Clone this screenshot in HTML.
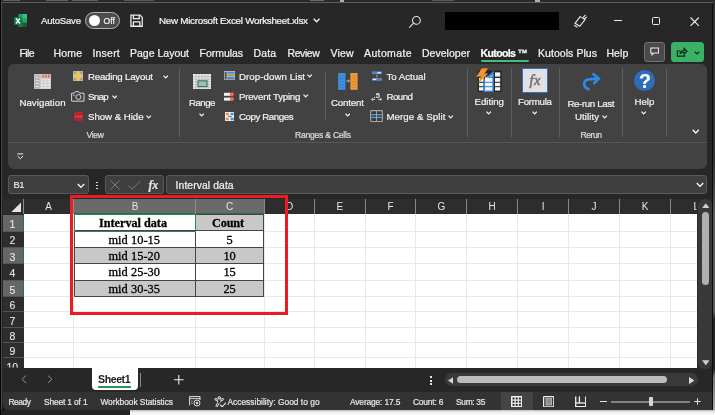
<!DOCTYPE html>
<html><head><meta charset="utf-8"><title>New Microsoft Excel Worksheet.xlsx - Excel</title>
<style>
html,body{margin:0;padding:0}
body{width:715px;height:415px;position:relative;overflow:hidden;background:#0c0c0c;font-family:"Liberation Sans",sans-serif}
div,svg{position:absolute;box-sizing:border-box}
.t{line-height:14px;height:14px;white-space:pre;-webkit-text-stroke:0.22px currentColor}
.win{left:2px;top:2px;width:709.8px;height:407.8px;background:#272727;border-radius:0 0 0 5px}
.ribbon{left:8px;top:64px;width:698.5px;height:105px;background:#424242;border-radius:6px}
.vd{width:1px;background:#5e5e5e}
.box{background:#3f3f3f;border:1px solid #5a5a5a;border-radius:3px;top:175.3px;height:19px}
.hsep{width:1px;top:199.4px;height:14.4px;background:#8a8a8a}
.gl{background:#e8e8e8}
.rh{left:2.5px;width:21.3px;background:#2d2d2d}
.cell{border:1px solid #4a4a4a}
</style></head><body><div id="root" style="left:0;top:0;width:715px;height:415px;overflow:hidden;will-change:transform">
<!-- outer strips -->
<div style="left:0;top:0;width:715px;height:2.4px;background:#2a2a2a"></div>
<div style="left:0;top:409.6px;width:715px;height:5.4px;background:linear-gradient(#bdbdbd,#f2f2f2 45%,#f6f6f6)"></div><div style="left:0;top:409.6px;width:129.8px;height:5.4px;background:#242424"></div>
<div style="left:0;top:0;width:1.3px;height:415px;background:#050505"></div>
<div style="left:711.8px;top:0;width:3.2px;height:410px;background:linear-gradient(#303030,#343434 40%,#585858 52%,#585858 76%,#222 78%,#222 90%,#777 92%,#aaa)"></div><div style="left:711.8px;top:2px;width:1px;height:408px;background:#0c0c0c"></div>
<div class="win"></div>
<div style="left:1.6px;top:1.7px;width:711px;height:0.9px;background:#5c5c5c"></div>
<div style="left:1.2px;top:2px;width:0.8px;height:408px;background:#4a4a4a"></div>
<div style="left:3px;top:0;width:17px;height:1.3px;background:#8a8a8a;opacity:.55"></div>
<div style="left:46px;top:0;width:22px;height:1.3px;background:#8a8a8a;opacity:.6"></div>
<div style="left:72px;top:0;width:26px;height:1.3px;background:#8a8a8a;opacity:.6"></div>
<div style="left:124px;top:0;width:30px;height:1.3px;background:#8a8a8a;opacity:.5"></div>
<div style="left:310px;top:0;width:14px;height:1.3px;background:#9a9a9a;opacity:.6"></div>
<div style="left:340px;top:0;width:4px;height:1.6px;background:#cfcfcf;opacity:.8"></div>
<div style="left:432px;top:0;width:22px;height:1.3px;background:#8a8a8a;opacity:.5"></div>
<div style="left:535px;top:0;width:5px;height:1.6px;background:#cfcfcf;opacity:.8"></div>

<!-- TITLE BAR -->
<svg style="left:14.2px;top:14.2px" width="13.2" height="13.2" viewBox="0 0 27 27">
 <rect x="9" y="0" width="18" height="27" rx="2" fill="#21a366"/>
 <rect x="18" y="0" width="9" height="9" fill="#33c481"/><rect x="18" y="9" width="9" height="9" fill="#21a366"/>
 <rect x="9" y="13.5" width="9" height="13.5" fill="#107c41"/><rect x="18" y="18" width="9" height="9" fill="#185c37"/>
 <rect x="0" y="6" width="16.5" height="16.5" rx="1.8" fill="#107c41"/>
 <path d="M4.2 9 L12.2 19.5 M12.2 9 L4.2 19.5" stroke="#fff" stroke-width="2.9" fill="none"/>
</svg>
<div style="left:85.3px;top:12px;width:35px;height:17.2px;border:1.2px solid #b4b4b4;border-radius:9px;background:#4c4c4c"></div>
<div style="left:88.6px;top:15.1px;width:11.2px;height:11.2px;border-radius:6px;background:#fff"></div>
<svg style="left:129.8px;top:14.4px" width="13.2" height="13.2" viewBox="0 0 14 14" fill="none" stroke="#f0f0f0" stroke-width="1.35">
 <path d="M1 1.2 H10.6 L13 3.6 V13 H1 Z"/><path d="M3.6 1.2 V5 H9.8 V1.2"/><path d="M3.6 13 V8.3 H10.4 V13"/>
</svg>
<svg style="left:313px;top:18.2px" width="7.2" height="5" viewBox="0 0 7.2 5" fill="none" stroke="#f4f4f4" stroke-width="1.3"><path d="M0.7 0.8 L3.6 3.8 L6.5 0.8"/></svg>
<svg style="left:408px;top:15px" width="14" height="14" viewBox="0 0 14 14" fill="none" stroke="#e8e8e8" stroke-width="1.1"><circle cx="8.4" cy="5.4" r="3.9"/><path d="M5.6 8.2 L1.2 12.6"/></svg>
<div style="left:445.3px;top:12px;width:114.2px;height:18px;background:#000"></div>
<svg style="left:573px;top:14px" width="15" height="14" viewBox="0 0 15 14" fill="none" stroke="#e8e8e8" stroke-width="1.1"><path d="M7.2 2.6 L12 5.6 L6.8 12.3 L2 9.3 Z"/><path d="M10 3.6 L12.6 0.8 M11.2 5 L13.8 3"/><path d="M1.2 11.2 L4.4 13.2"/></svg>
<div style="left:614px;top:19.8px;width:8.4px;height:1.1px;background:#ededed"></div>
<div style="left:651.6px;top:16.8px;width:8.6px;height:8.6px;border:1.1px solid #ededed;border-radius:1.5px"></div>
<svg style="left:689.5px;top:16.5px" width="9.4" height="9.4" viewBox="0 0 9.4 9.4" stroke="#ededed" stroke-width="1.1"><path d="M0.5 0.5 L8.9 8.9 M8.9 0.5 L0.5 8.9"/></svg>

<!-- MENU ROW -->
<div style="left:480.6px;top:60.1px;width:48.8px;height:2.2px;background:#43bd78;border-radius:1px"></div>
<div style="left:644.4px;top:42.4px;width:20.8px;height:19.4px;background:#4a4a4a;border:1px solid #707070;border-radius:3px"></div>
<svg style="left:650px;top:46.8px" width="9.4" height="9.2" viewBox="0 0 12 11" fill="none" stroke="#f0f0f0" stroke-width="1.35"><path d="M1 1 H11 V7.2 H5 L2.6 9.6 V7.2 H1 Z"/></svg>
<div style="left:671px;top:42.4px;width:32.8px;height:19.4px;background:#3bb168;border-radius:3.5px"></div>
<svg style="left:676.4px;top:46.6px" width="12" height="10.4" viewBox="0 0 14 12" fill="none" stroke="#0d2a18" stroke-width="1.4"><path d="M5.2 4.6 H1.6 V10.6 H10 V8.6"/><path d="M4.6 8 C5 5.4 7 4 9.4 4 V1.6 L12.8 4.8 L9.4 8 V5.8 C7.4 5.8 5.8 6.4 4.6 8 Z"/></svg>
<svg style="left:694px;top:50.5px" width="6" height="4" viewBox="0 0 6 4" fill="none" stroke="#0d2a18" stroke-width="1.1"><path d="M0.6 0.6 L3 3 L5.4 0.6"/></svg>

<!-- RIBBON -->
<div class="ribbon"></div>
<div style="left:8px;top:141.6px;width:698.5px;height:1px;background:#575757"></div>
<div class="vd" style="left:178.8px;top:68px;height:69px"></div>
<div class="vd" style="left:324.8px;top:72.4px;height:49px"></div>
<div class="vd" style="left:467.2px;top:68px;height:69px"></div>
<div class="vd" style="left:511.2px;top:68px;height:69px"></div>
<div class="vd" style="left:559.2px;top:68px;height:69px"></div>
<div class="vd" style="left:622.2px;top:68px;height:69px"></div>
<div class="vd" style="left:666.2px;top:68px;height:69px"></div>
<!-- Navigation icon -->
<svg style="left:33.6px;top:73.8px" width="17.6" height="15.6" viewBox="0 0 17.6 15.6">
 <rect x="0" y="0" width="17.6" height="15.6" rx="0.8" fill="#c6c6c6"/>
 <rect x="1" y="1.2" width="4.6" height="13.2" fill="#b4b4b4"/>
 <rect x="2" y="3" width="2.6" height="1" fill="#e6e6e6"/><rect x="2" y="6" width="2.6" height="1" fill="#e6e6e6"/><rect x="2" y="9" width="2.6" height="1" fill="#e6e6e6"/><rect x="2" y="12" width="2.6" height="1" fill="#e6e6e6"/>
 <rect x="6.6" y="1.4" width="10" height="2.4" fill="#e3b3a4"/>
 <rect x="8.6" y="0.6" width="1.1" height="3" fill="#dc5236"/><rect x="11.4" y="0.6" width="1.1" height="3" fill="#dc5236"/><rect x="14.2" y="0.6" width="1.1" height="3" fill="#dc5236"/>
 <g fill="#e4e4e4"><rect x="6.8" y="4.6" width="2.6" height="2"/><rect x="10.1" y="4.6" width="2.6" height="2"/><rect x="13.4" y="4.6" width="3" height="2"/>
 <rect x="6.8" y="7.3" width="2.6" height="2"/><rect x="10.1" y="7.3" width="2.6" height="2"/><rect x="13.4" y="7.3" width="3" height="2"/>
 <rect x="6.8" y="10" width="2.6" height="2"/><rect x="10.1" y="10" width="2.6" height="2"/><rect x="13.4" y="10" width="3" height="2"/>
 <rect x="6.8" y="12.7" width="2.6" height="1.8"/><rect x="10.1" y="12.7" width="2.6" height="1.8"/><rect x="13.4" y="12.7" width="3" height="1.8"/></g>
</svg>
<!-- Reading layout -->
<svg style="left:73px;top:71px" width="10.2" height="10" viewBox="0 0 10.2 10">
 <rect width="10.2" height="10" fill="#bdbdbd"/>
 <g fill="#9c9c9c"><rect x="0.6" y="0.6" width="2.4" height="2.2"/><rect x="7.2" y="0.6" width="2.4" height="2.2"/><rect x="0.6" y="7.2" width="2.4" height="2.2"/><rect x="7.2" y="7.2" width="2.4" height="2.2"/></g>
 <rect x="3.7" y="0" width="2.8" height="10" fill="#f1c44a"/><rect x="0" y="3.6" width="10.2" height="2.8" fill="#f1c44a"/>
</svg>
<!-- Snap camera -->
<svg style="left:71.4px;top:91px" width="13.6" height="10.8" viewBox="0 0 13.6 10.8" fill="none" stroke="#d6d6d6" stroke-width="1">
 <path d="M0.6 2.2 H3.4 L4.4 0.6 H7.6 L8.6 2.2 H13 V10.2 H0.6 Z"/><circle cx="7.4" cy="6" r="2.5"/><path d="M2 4.2 H3.6" />
</svg>
<svg style="left:111.6px;top:95px" width="5.4" height="4" viewBox="0 0 5.4 4" fill="none" stroke="#f4f4f4" stroke-width="1.25"><path d="M0.5 0.6 L2.7 2.9 L4.9 0.6"/></svg>
<!-- Show & Hide -->
<svg style="left:74px;top:112.2px" width="9" height="9" viewBox="0 0 9 9"><rect width="9" height="9" rx="1.4" fill="#b3262d"/><g fill="#d9666a"><rect x="1.4" y="3.7" width="1.5" height="1.6"/><rect x="3.8" y="3.7" width="1.5" height="1.6"/><rect x="6.2" y="3.7" width="1.5" height="1.6"/></g></svg>
<svg style="left:146.4px;top:114.6px" width="5.4" height="4" viewBox="0 0 5.4 4" fill="none" stroke="#f4f4f4" stroke-width="1.25"><path d="M0.5 0.6 L2.7 2.9 L4.9 0.6"/></svg>
<svg style="left:162.8px;top:75px" width="5.4" height="4" viewBox="0 0 5.4 4" fill="none" stroke="#f4f4f4" stroke-width="1.25"><path d="M0.5 0.6 L2.7 2.9 L4.9 0.6"/></svg>
<!-- Range icon -->
<svg style="left:193px;top:73.8px" width="18" height="15.4" viewBox="0 0 18 15.4">
 <rect width="18" height="15.4" fill="#ececec"/>
 <g stroke="#b4b4b4" stroke-width="0.8"><path d="M0 2.6H18M0 5.2H18M0 7.8H18M0 10.4H18M0 13H18M3 0V15.4M6 0V15.4M9 0V15.4M12 0V15.4M15 0V15.4"/></g>
 <rect x="5" y="6.8" width="9" height="5.8" fill="#aab6c6" stroke="#2c7a4e" stroke-width="1.1"/>
</svg>
<svg style="left:198.8px;top:112.6px" width="5.4" height="4" viewBox="0 0 5.4 4" fill="none" stroke="#f4f4f4" stroke-width="1.25"><path d="M0.5 0.6 L2.7 2.9 L4.9 0.6"/></svg>
<!-- Drop-down list icon -->
<svg style="left:223.8px;top:71.4px" width="11.2" height="8.6" viewBox="0 0 11.2 8.6">
 <rect width="11.2" height="8.6" fill="#d8d8d8"/><rect x="0.6" y="0.6" width="2" height="7.4" fill="#4a4a4a"/>
 <rect x="3.2" y="0.6" width="7.4" height="2.2" fill="#3c8fe0"/><rect x="3.2" y="3.3" width="7.4" height="2" fill="#c98a3c"/><rect x="3.2" y="5.8" width="7.4" height="2.2" fill="#3c8fe0"/>
</svg>
<svg style="left:307.2px;top:74.2px" width="5.4" height="4" viewBox="0 0 5.4 4" fill="none" stroke="#f4f4f4" stroke-width="1.25"><path d="M0.5 0.6 L2.7 2.9 L4.9 0.6"/></svg>
<!-- Prevent typing -->
<svg style="left:224px;top:92px" width="10.6" height="9.6" viewBox="0 0 10.6 9.6">
 <rect x="0" y="0.8" width="7" height="3" fill="#f2f2f2"/><rect x="0" y="5.6" width="7" height="3" fill="#f2f2f2"/>
 <circle cx="8" cy="2.3" r="2.1" fill="#e9503f"/><circle cx="8" cy="7.1" r="2.1" fill="#e9503f"/><circle cx="8" cy="2.3" r="0.8" fill="#f5b0a6"/><circle cx="8" cy="7.1" r="0.8" fill="#f5b0a6"/>
</svg>
<svg style="left:303.4px;top:94.4px" width="5.4" height="4" viewBox="0 0 5.4 4" fill="none" stroke="#f4f4f4" stroke-width="1.25"><path d="M0.5 0.6 L2.7 2.9 L4.9 0.6"/></svg>
<!-- Copy ranges -->
<svg style="left:225px;top:112px" width="9.4" height="9" viewBox="0 0 9.4 9">
 <rect width="9.4" height="9" fill="#f0f0f0"/><rect x="0.8" y="0.8" width="3" height="2.4" fill="#ee8a2c"/><rect x="0.8" y="5.8" width="3" height="2.4" fill="#ee8a2c"/>
 <rect x="5.6" y="0.8" width="3" height="2.4" fill="#3c8fe0"/><rect x="5.6" y="5.8" width="3" height="2.4" fill="#3c8fe0"/><path d="M2.6 4.5 H6.2 M5.2 3.6 L6.4 4.5 L5.2 5.4" stroke="#555" stroke-width="0.7" fill="none"/>
</svg>
<!-- Content -->
<svg style="left:337.6px;top:73.4px" width="20" height="16.8" viewBox="0 0 20 16.8">
 <rect x="0.2" y="0" width="7.2" height="16.8" fill="#3f8fe4"/><rect x="12.4" y="0" width="7.2" height="16.8" fill="#ee9a3e"/>
 <g stroke="#2f77c6" stroke-width="0.7"><path d="M1.6 3H6M1.6 5.8H6M1.6 8.6H6M1.6 11.4H6M1.6 14.2H6"/></g>
 <g stroke="#d07c22" stroke-width="0.7"><path d="M13.8 3H18.2M13.8 5.8H18.2M13.8 8.6H18.2M13.8 11.4H18.2M13.8 14.2H18.2"/></g>
 <path d="M8.2 8 H11.4 M10.2 6.8 L11.6 8 L10.2 9.2" stroke="#d8d8d8" stroke-width="0.8" fill="none"/>
</svg>
<svg style="left:344.8px;top:112.6px" width="5.4" height="4" viewBox="0 0 5.4 4" fill="none" stroke="#f4f4f4" stroke-width="1.25"><path d="M0.5 0.6 L2.7 2.9 L4.9 0.6"/></svg>
<!-- To Actual -->
<svg style="left:371.6px;top:71px" width="10" height="10.2" viewBox="0 0 10 10.2">
 <rect x="0" y="0.4" width="10" height="2.8" fill="#3c8fe0"/><rect x="0" y="7" width="10" height="2.8" fill="#3c8fe0"/>
 <rect x="1.6" y="1.2" width="2.6" height="1.2" fill="#e8484c"/><rect x="5.4" y="1.2" width="3.4" height="1.2" fill="#f4f4f4"/>
 <rect x="0.8" y="7.8" width="3.4" height="1.2" fill="#f4f4f4"/><rect x="5.4" y="7.8" width="2.8" height="1.2" fill="#e8484c"/>
 <rect x="4.4" y="3.9" width="1" height="0.9" fill="#e0e0e0"/><rect x="4.4" y="5.5" width="1" height="0.9" fill="#e0e0e0"/>
</svg>
<!-- Round -->
<svg style="left:371.2px;top:92.2px" width="11.2" height="9.6" viewBox="0 0 11.2 9.6" fill="none" stroke="#e4e4e4" stroke-width="0.9">
 <path d="M0.6 7.4 H4 M1.8 6.2 L0.6 7.4 L1.8 8.6"/><path d="M7.2 7.4 H10.6 M9.4 6.2 L10.6 7.4 L9.4 8.6"/>
 <text x="2.6" y="5.6" font-family="Liberation Sans, sans-serif" font-size="7.6" font-weight="bold" fill="#e4e4e4" stroke="none">.5</text>
</svg>
<!-- Merge & split -->
<svg style="left:370px;top:110.2px" width="13" height="12.2" viewBox="0 0 13 12.2">
 <rect x="0.6" y="0.6" width="11.8" height="11" rx="0.8" fill="#3d3d3d" stroke="#a8a8a8" stroke-width="1.1"/>
 <rect x="1.2" y="4.1" width="10.6" height="4" fill="#55a2ea"/><rect x="1.2" y="5.2" width="10.6" height="1.8" fill="#4a4a4a"/>
 <path d="M6.5 0.6V11.6" stroke="#a8a8a8" stroke-width="0.9" fill="none"/>
</svg>
<svg style="left:448.4px;top:114.6px" width="5.4" height="4" viewBox="0 0 5.4 4" fill="none" stroke="#f4f4f4" stroke-width="1.25"><path d="M0.5 0.6 L2.7 2.9 L4.9 0.6"/></svg>
<!-- Editing -->
<svg style="left:476.4px;top:67.6px" width="25.6" height="24.2" viewBox="0 0 25.6 24.2">
 <rect x="1.6" y="2.6" width="24" height="21.4" rx="1" fill="#262626"/>
 <g fill="#f2f2f2"><rect x="3" y="10" width="4.6" height="3.8"/><rect x="3" y="14.8" width="4.6" height="3.4"/><rect x="3" y="19.2" width="4.6" height="3.4"/>
 <rect x="19" y="4.4" width="5.2" height="4.2"/><rect x="19" y="10" width="5.2" height="3.8"/><rect x="19" y="14.8" width="5.2" height="3.4"/><rect x="19" y="19.2" width="5.2" height="3.4"/></g>
 <path d="M7.6 24 V11.5 L17.8 2.8 V24 Z" fill="#2f86dc"/>
 <g fill="#f2f2f2"><path d="M9 12.4 L16.4 6.2 V8.8 H9 Z" fill="#8ec0f0"/><rect x="9" y="10" width="7.4" height="3.8"/><rect x="9" y="14.8" width="7.4" height="3.4"/><rect x="9" y="19.2" width="7.4" height="3.4"/></g>
 <path d="M5.8 0.2 L12 0.2 L8.8 5.4 L12.4 5.4 L2 15.6 L4.8 8.8 L0.2 8.8 Z" fill="#f08a24"/><path d="M6.4 1.4 L3 7.6 M9 1.4 L5.6 7.6 M9.4 6.6 L5 12" stroke="#f6b060" stroke-width="0.7" fill="none"/>
</svg>
<svg style="left:486.4px;top:111.2px" width="5.4" height="4" viewBox="0 0 5.4 4" fill="none" stroke="#f4f4f4" stroke-width="1.25"><path d="M0.5 0.6 L2.7 2.9 L4.9 0.6"/></svg>
<!-- Formula -->
<div style="left:522.4px;top:68px;width:25.6px;height:25.2px;background:#e1e1e1;border:1.6px solid #2f6fc8"></div>
<div class="t" style="left:529.6px;top:72.2px;font-family:'Liberation Serif',serif;font-style:italic;font-size:14.5px;line-height:16px;height:16px;color:#747474;letter-spacing:0.3px;-webkit-text-stroke:0.6px #747474">fx</div>
<svg style="left:531.8px;top:111.2px" width="5.4" height="4" viewBox="0 0 5.4 4" fill="none" stroke="#f4f4f4" stroke-width="1.25"><path d="M0.5 0.6 L2.7 2.9 L4.9 0.6"/></svg>
<!-- Re-run -->
<svg style="left:581px;top:72px" width="20" height="20" viewBox="0 0 20 20" fill="none" stroke="#2e8ae6" stroke-width="2.6"><path d="M8.6 17.4 C2.4 16.4 0.6 8 7.6 7.4 L16.6 6.6"/><path d="M11.6 1.6 L17.8 6.6 L12.4 12"/></svg>
<svg style="left:602.2px;top:115.2px" width="5.4" height="4" viewBox="0 0 5.4 4" fill="none" stroke="#f4f4f4" stroke-width="1.25"><path d="M0.5 0.6 L2.7 2.9 L4.9 0.6"/></svg>
<!-- Help -->
<div style="left:633.6px;top:69.7px;width:21.8px;height:21.8px;border-radius:11px;background:#2e6db8"></div>
<div class="t" style="left:639px;top:70.6px;font-weight:bold;font-size:19.5px;line-height:20px;height:20px;color:#fff">?</div>
<svg style="left:641.4px;top:111.2px" width="5.4" height="4" viewBox="0 0 5.4 4" fill="none" stroke="#f4f4f4" stroke-width="1.25"><path d="M0.5 0.6 L2.7 2.9 L4.9 0.6"/></svg>
<svg style="left:691.6px;top:128.6px" width="7.6" height="5.4" viewBox="0 0 7.6 5.4" fill="none" stroke="#fff" stroke-width="1.3"><path d="M0.7 0.8 L3.8 4 L6.9 0.8"/></svg>

<!-- QAT icon -->
<svg style="left:17.3px;top:152.8px" width="6.6" height="7" viewBox="0 0 6.6 7" fill="none" stroke="#f0f0f0" stroke-width="1"><path d="M0.4 0.9 H6.2"/><path d="M0.6 3 L3.3 5.7 L6 3"/></svg>

<!-- FORMULA BAR -->
<div class="box" style="left:8.4px;width:80.8px"></div>
<svg style="left:77px;top:183px" width="8" height="6" viewBox="0 0 8 6" fill="none" stroke="#fff" stroke-width="1.3"><path d="M0.8 1 L4 4.4 L7.2 1"/></svg>
<div style="left:96.4px;top:181.6px;width:1.5px;height:1.5px;background:#ddd"></div>
<div style="left:96.4px;top:184.7px;width:1.5px;height:1.5px;background:#ddd"></div>
<div style="left:96.4px;top:187.8px;width:1.5px;height:1.5px;background:#ddd"></div>
<div class="box" style="left:105px;width:58.8px"></div>
<svg style="left:110px;top:180px" width="10" height="10" viewBox="0 0 10 10" stroke="#7b7b7b" stroke-width="1" fill="none"><path d="M0.5 0.5 L9.5 9.5 M9.5 0.5 L0.5 9.5"/></svg>
<svg style="left:127.6px;top:180px" width="13" height="10" viewBox="0 0 13 10" stroke="#7b7b7b" stroke-width="1" fill="none"><path d="M0.5 5.5 L4.2 9.2 L12.5 0.8"/></svg>
<div class="t" style="left:148.6px;top:177.6px;font-family:'Liberation Serif',serif;font-style:italic;font-weight:bold;font-size:12px;color:#e6e6e6;letter-spacing:-0.3px">fx</div>
<div class="box" style="left:166.4px;width:540.2px"></div>
<svg style="left:696px;top:181.5px" width="8" height="6" viewBox="0 0 8 6" fill="none" stroke="#fff" stroke-width="1.3"><path d="M0.8 1 L4 4.4 L7.2 1"/></svg>

<!-- GRID -->
<div style="left:2.5px;top:198.6px;width:709.3px;height:15.4px;background:#2d2d2d"></div>
<div style="left:23.8px;top:213.8px;width:673px;height:153.9px;background:#fff"></div>
<svg style="left:11px;top:202px" width="10.4" height="10.4" viewBox="0 0 10.4 10.4"><path d="M10.4 0 V10.4 H0 Z" fill="#e4e4e4"/></svg>
<div style="left:73.4px;top:198.6px;width:190.6px;height:15px;background:#6a6a6a"></div>
<div style="left:73.4px;top:213px;width:190.6px;height:1.6px;background:#217346"></div>
<div class="hsep" style="left:23.3px"></div>
<div class="hsep" style="left:72.9px"></div>
<div class="hsep" style="left:195.1px"></div>
<div class="hsep" style="left:263.5px"></div>
<div class="hsep" style="left:314.0px"></div>
<div class="hsep" style="left:364.8px"></div>
<div class="hsep" style="left:415.4px"></div>
<div class="hsep" style="left:466.2px"></div>
<div class="hsep" style="left:517.3px"></div>
<div class="hsep" style="left:568.1px"></div>
<div class="hsep" style="left:619.0px"></div>
<div class="hsep" style="left:670.1px"></div>
<div class="rh" style="top:214.6px;height:16.4px;background:#666"></div>
<div style="left:22.8px;top:214.6px;width:1.4px;height:16.4px;background:#217346"></div>
<div class="rh" style="top:231.0px;height:16.4px;background:#2d2d2d"></div>
<div style="left:2.5px;top:230.5px;width:21px;height:1px;background:#555"></div>
<div class="rh" style="top:247.4px;height:16.4px;background:#666"></div>
<div style="left:22.8px;top:247.4px;width:1.4px;height:16.4px;background:#217346"></div>
<div style="left:2.5px;top:246.9px;width:21px;height:1px;background:#555"></div>
<div class="rh" style="top:263.8px;height:16.4px;background:#2d2d2d"></div>
<div style="left:2.5px;top:263.3px;width:21px;height:1px;background:#555"></div>
<div class="rh" style="top:280.2px;height:16.4px;background:#666"></div>
<div style="left:22.8px;top:280.2px;width:1.4px;height:16.4px;background:#217346"></div>
<div style="left:2.5px;top:279.7px;width:21px;height:1px;background:#555"></div>
<div class="rh" style="top:296.6px;height:15.3px;background:#2d2d2d"></div>
<div style="left:2.5px;top:296.1px;width:21px;height:1px;background:#555"></div>
<div class="rh" style="top:311.9px;height:15.3px;background:#2d2d2d"></div>
<div style="left:2.5px;top:311.4px;width:21px;height:1px;background:#555"></div>
<div class="rh" style="top:327.2px;height:15.3px;background:#2d2d2d"></div>
<div style="left:2.5px;top:326.7px;width:21px;height:1px;background:#555"></div>
<div class="rh" style="top:342.5px;height:15.3px;background:#2d2d2d"></div>
<div style="left:2.5px;top:342.0px;width:21px;height:1px;background:#555"></div>
<div class="rh" style="top:357.8px;height:9.8px;background:#2d2d2d"></div>
<div style="left:2.5px;top:357.3px;width:21px;height:1px;background:#555"></div>
<div class="gl" style="left:24px;top:230.5px;width:672.8px;height:1px"></div>
<div class="gl" style="left:24px;top:246.9px;width:672.8px;height:1px"></div>
<div class="gl" style="left:24px;top:263.3px;width:672.8px;height:1px"></div>
<div class="gl" style="left:24px;top:279.7px;width:672.8px;height:1px"></div>
<div class="gl" style="left:24px;top:296.1px;width:672.8px;height:1px"></div>
<div class="gl" style="left:24px;top:311.4px;width:672.8px;height:1px"></div>
<div class="gl" style="left:24px;top:326.7px;width:672.8px;height:1px"></div>
<div class="gl" style="left:24px;top:342.0px;width:672.8px;height:1px"></div>
<div class="gl" style="left:24px;top:357.3px;width:672.8px;height:1px"></div>
<div class="gl" style="left:72.9px;top:213.8px;width:1px;height:153.8px"></div>
<div class="gl" style="left:195.1px;top:213.8px;width:1px;height:153.8px"></div>
<div class="gl" style="left:263.5px;top:213.8px;width:1px;height:153.8px"></div>
<div class="gl" style="left:314.0px;top:213.8px;width:1px;height:153.8px"></div>
<div class="gl" style="left:364.8px;top:213.8px;width:1px;height:153.8px"></div>
<div class="gl" style="left:415.4px;top:213.8px;width:1px;height:153.8px"></div>
<div class="gl" style="left:466.2px;top:213.8px;width:1px;height:153.8px"></div>
<div class="gl" style="left:517.3px;top:213.8px;width:1px;height:153.8px"></div>
<div class="gl" style="left:568.1px;top:213.8px;width:1px;height:153.8px"></div>
<div class="gl" style="left:619.0px;top:213.8px;width:1px;height:153.8px"></div>
<div class="gl" style="left:670.1px;top:213.8px;width:1px;height:153.8px"></div>
<div style="left:73.9px;top:214.6px;width:121.7px;height:16.4px;background:#fff"></div>
<div style="left:195.6px;top:214.6px;width:68.4px;height:16.4px;background:#c8c8c8"></div>
<div style="left:73.9px;top:231.0px;width:121.7px;height:16.4px;background:#fff"></div>
<div style="left:195.6px;top:231.0px;width:68.4px;height:16.4px;background:#fff"></div>
<div style="left:73.9px;top:247.4px;width:121.7px;height:16.4px;background:#c8c8c8"></div>
<div style="left:195.6px;top:247.4px;width:68.4px;height:16.4px;background:#c8c8c8"></div>
<div style="left:73.9px;top:263.8px;width:121.7px;height:16.4px;background:#fff"></div>
<div style="left:195.6px;top:263.8px;width:68.4px;height:16.4px;background:#fff"></div>
<div style="left:73.9px;top:280.2px;width:121.7px;height:16.4px;background:#c8c8c8"></div>
<div style="left:195.6px;top:280.2px;width:68.4px;height:16.4px;background:#c8c8c8"></div>
<div style="left:73.9px;top:214.0px;width:190.1px;height:1.1px;background:#444"></div>
<div style="left:73.9px;top:230.4px;width:190.1px;height:1.1px;background:#444"></div>
<div style="left:73.9px;top:246.8px;width:190.1px;height:1.1px;background:#444"></div>
<div style="left:73.9px;top:263.2px;width:190.1px;height:1.1px;background:#444"></div>
<div style="left:73.9px;top:279.6px;width:190.1px;height:1.1px;background:#444"></div>
<div style="left:73.9px;top:296.0px;width:190.1px;height:1.1px;background:#444"></div>
<div style="left:73.8px;top:214.0px;width:1.1px;height:83.1px;background:#444"></div>
<div style="left:195.0px;top:214.0px;width:1.1px;height:83.1px;background:#444"></div>
<div style="left:263.2px;top:214.0px;width:1.1px;height:83.1px;background:#444"></div>
<div style="left:73.6px;top:213.8px;width:122.6px;height:17.8px;border:1.1px solid #2a8656"></div>
<div style="left:69.6px;top:194.6px;width:218.6px;height:120.6px;border:3.3px solid #ec1c24;z-index:5"></div>

<!-- V SCROLL -->
<div style="left:696.8px;top:198.6px;width:15px;height:171px;background:#2a2a2a"></div>
<div style="left:698px;top:199px;width:13.8px;height:170.2px;background:#393939;border-radius:6.6px"></div>
<div style="left:701.7px;top:212.2px;width:7px;height:72.4px;background:#b0b0b0;border-radius:3.5px"></div>
<svg style="left:701.5px;top:203px" width="7.6" height="5.4" viewBox="0 0 8 5.4"><path d="M4 0 L8 5.4 H0 Z" fill="#d0d0d0"/></svg>
<svg style="left:701.6px;top:360.1px" width="7.6" height="5.4" viewBox="0 0 8 5.4"><path d="M0 0 H8 L4 5.4 Z" fill="#d0d0d0"/></svg>

<!-- TAB BAR -->
<div style="left:2.5px;top:367.6px;width:694.4px;height:23px;background:#272727"></div>
<div style="left:2.5px;top:369.4px;width:709.3px;height:22px;background:#272727"></div>
<svg style="left:21.4px;top:375.4px" width="6" height="8.6" viewBox="0 0 6 8.6" fill="none" stroke="#8f8f8f" stroke-width="1"><path d="M5.2 0.5 L1 4.3 L5.2 8.1"/></svg>
<svg style="left:47.4px;top:375.4px" width="6" height="8.6" viewBox="0 0 6 8.6" fill="none" stroke="#8f8f8f" stroke-width="1"><path d="M0.8 0.5 L5 4.3 L0.8 8.1"/></svg>
<div style="left:91.6px;top:367.6px;width:46px;height:22.2px;background:#fff;border-radius:0 0 4px 4px"></div>
<div style="left:98px;top:385.8px;width:33px;height:2.2px;background:#2a9558"></div>
<div style="left:139.9px;top:372.6px;width:1px;height:14.2px;background:#8a8a8a"></div>
<svg style="left:174px;top:375px" width="9.6" height="9.6" viewBox="0 0 9.6 9.6" stroke="#f0f0f0" stroke-width="1.1"><path d="M4.8 0 V9.6 M0 4.8 H9.6"/></svg>
<div style="left:430.4px;top:376.4px;width:2px;height:2px;background:#e6e6e6"></div>
<div style="left:430.4px;top:379.6px;width:2px;height:2px;background:#e6e6e6"></div>
<div style="left:430.4px;top:382.8px;width:2px;height:2px;background:#e6e6e6"></div>
<div style="left:445px;top:373.4px;width:253.4px;height:13px;background:#3a3a3a;border-radius:6.5px"></div>
<div style="left:457.4px;top:376.3px;width:209.2px;height:7.2px;background:#bcbcbc;border-radius:3.6px"></div>
<svg style="left:448px;top:376.5px" width="5.4" height="7" viewBox="0 0 5.4 7"><path d="M5.4 0 V7 L0 3.5 Z" fill="#d8d8d8"/></svg>
<svg style="left:689px;top:376.5px" width="5.4" height="7" viewBox="0 0 5.4 7"><path d="M0 0 V7 L5.4 3.5 Z" fill="#d8d8d8"/></svg>

<!-- STATUS BAR -->
<div style="left:2.5px;top:392.2px;width:709.3px;height:17.6px;background:#333;border-radius:0 0 0 5px"></div>
<div style="left:501px;top:392.2px;width:31.8px;height:17.6px;background:#444"></div>
<!-- macro record -->
<svg style="left:188.6px;top:396.4px" width="12.4" height="10.6" viewBox="0 0 12.4 10.6" fill="none" stroke="#e4e4e4" stroke-width="1">
 <path d="M0.6 9.4 V0.6 H11 V4"/><path d="M0.6 2.6 H11" stroke-width="0.9"/><path d="M2.2 5.2 H3.6 M2.2 7.4 H3.6" stroke-width="0.8"/>
 <circle cx="8" cy="7" r="3" stroke-width="1"/><circle cx="8" cy="7" r="1.2" fill="#e4e4e4" stroke="none"/>
</svg>
<!-- accessibility -->
<svg style="left:214px;top:395.6px" width="12.4" height="11.8" viewBox="0 0 12.4 11.8" fill="none" stroke="#e8e8e8" stroke-width="1" stroke-linejoin="round" stroke-linecap="round">
 <circle cx="5.2" cy="1.8" r="1.2"/>
 <path d="M1.4 2.6 C0.4 2.8 0.6 4.2 1.6 4.2 L3.6 4.6 V6.6 L2 10 C1.8 11 3 11.4 3.4 10.6 L5 7.6"/><path d="M9 2.6 C10 2.8 9.8 4.2 8.8 4.2 L6.8 4.6 V6"/><path d="M1.4 2.6 L3.8 3.2 M9 2.6 L6.6 3.2"/>
 <path d="M6.4 9 L8.2 10.8 L11.8 6.8" stroke-width="1.1"/>
</svg>
<!-- normal view -->
<svg style="left:510.6px;top:395.6px" width="11.4" height="11.4" viewBox="0 0 11.4 11.4"><rect width="11.4" height="11.4" rx="0.8" fill="#f2f2f2"/>
 <g fill="#2a2a2a"><rect x="1.5" y="1.5" width="2" height="2"/><rect x="4.7" y="1.5" width="2" height="2"/><rect x="7.9" y="1.5" width="2" height="2"/>
 <rect x="1.5" y="4.7" width="2" height="2"/><rect x="4.7" y="4.7" width="2" height="2"/><rect x="7.9" y="4.7" width="2" height="2"/>
 <rect x="1.5" y="7.9" width="2" height="2"/><rect x="4.7" y="7.9" width="2" height="2"/><rect x="7.9" y="7.9" width="2" height="2"/></g></svg>
<!-- page layout -->
<svg style="left:542.6px;top:395.6px" width="11.4" height="11.4" viewBox="0 0 11.4 11.4"><rect x="0.6" y="0.6" width="10.2" height="10.2" rx="0.6" fill="#3a3a3a" stroke="#f0f0f0" stroke-width="1.2"/><rect x="3" y="2.6" width="5.4" height="6.4" fill="#8c8c8c" stroke="#d0d0d0" stroke-width="0.7"/></svg>
<!-- page break -->
<svg style="left:574.6px;top:395.6px" width="11.4" height="11.4" viewBox="0 0 11.4 11.4" fill="none" stroke="#f0f0f0" stroke-width="1.3"><path d="M0.7 0.4 V10.7 H10.7 V0.4"/><path d="M0.7 7 H10.7" /><path d="M4.4 0.4 V7"/></svg>
<!-- zoom slider -->
<div style="left:600.4px;top:401.1px;width:6.6px;height:1.1px;background:#e6e6e6"></div>
<div style="left:611px;top:400.7px;width:79px;height:1.9px;background:#828282"></div>
<div style="left:649.1px;top:397px;width:3.9px;height:8.8px;background:#d6d6d6;border-radius:1px"></div>
<svg style="left:694px;top:398.2px" width="7" height="7" viewBox="0 0 7 7" stroke="#e6e6e6" stroke-width="1"><path d="M3.5 0.3 V6.7 M0.3 3.5 H6.7"/></svg>


<div class=t style="left:41.00px;top:14.00px;font-family:'Liberation Sans', sans-serif;font-size:9.6px;color:#f2f2f2;letter-spacing:-0.230px;">AutoSave</div>
<div class=t style="left:103.50px;top:14.00px;font-family:'Liberation Sans', sans-serif;font-size:8.6px;color:#f2f2f2;letter-spacing:0.094px;">Off</div>
<div class=t style="left:159.00px;top:14.00px;font-family:'Liberation Sans', sans-serif;font-size:9.8px;color:#f2f2f2;letter-spacing:-0.264px;">New Microsoft Excel Worksheet.xlsx</div>
<div class=t style="left:19.40px;top:46.00px;font-family:'Liberation Sans', sans-serif;font-size:10.5px;color:#f2f2f2;letter-spacing:-0.574px;">File</div>
<div class=t style="left:53.60px;top:46.00px;font-family:'Liberation Sans', sans-serif;font-size:10.5px;color:#f2f2f2;letter-spacing:0.128px;">Home</div>
<div class=t style="left:92.40px;top:46.00px;font-family:'Liberation Sans', sans-serif;font-size:10.5px;color:#f2f2f2;letter-spacing:0.227px;">Insert</div>
<div class=t style="left:130.00px;top:46.00px;font-family:'Liberation Sans', sans-serif;font-size:10.5px;color:#f2f2f2;letter-spacing:0.003px;">Page Layout</div>
<div class=t style="left:199.60px;top:46.00px;font-family:'Liberation Sans', sans-serif;font-size:10.5px;color:#f2f2f2;letter-spacing:-0.052px;">Formulas</div>
<div class=t style="left:253.60px;top:46.00px;font-family:'Liberation Sans', sans-serif;font-size:10.5px;color:#f2f2f2;letter-spacing:0.071px;">Data</div>
<div class=t style="left:287.60px;top:46.00px;font-family:'Liberation Sans', sans-serif;font-size:10.5px;color:#f2f2f2;letter-spacing:-0.448px;">Review</div>
<div class=t style="left:330.40px;top:46.00px;font-family:'Liberation Sans', sans-serif;font-size:10.5px;color:#f2f2f2;letter-spacing:0.207px;">View</div>
<div class=t style="left:364.00px;top:46.00px;font-family:'Liberation Sans', sans-serif;font-size:10.5px;color:#f2f2f2;letter-spacing:0.378px;">Automate</div>
<div class=t style="left:422.00px;top:46.00px;font-family:'Liberation Sans', sans-serif;font-size:10.5px;color:#f2f2f2;letter-spacing:0.016px;">Developer</div>
<div class=t style="left:538.00px;top:46.00px;font-family:'Liberation Sans', sans-serif;font-size:10.5px;color:#f2f2f2;letter-spacing:0.057px;">Kutools Plus</div>
<div class=t style="left:606.40px;top:46.00px;font-family:'Liberation Sans', sans-serif;font-size:10.5px;color:#f2f2f2;letter-spacing:0.130px;">Help</div>
<div class=t style="left:480.60px;top:46.00px;font-family:'Liberation Sans', sans-serif;font-size:10.5px;color:#fff;letter-spacing:-0.638px;font-weight:bold;">Kutools ™</div>
<div class=t style="left:19.40px;top:95.60px;font-family:'Liberation Sans', sans-serif;font-size:9.7px;color:#f0f0f0;letter-spacing:0.047px;">Navigation</div>
<div class=t style="left:88.00px;top:70.00px;font-family:'Liberation Sans', sans-serif;font-size:9.7px;color:#f0f0f0;letter-spacing:-0.221px;">Reading Layout</div>
<div class=t style="left:88.00px;top:90.00px;font-family:'Liberation Sans', sans-serif;font-size:9.7px;color:#f0f0f0;letter-spacing:-0.675px;">Snap</div>
<div class=t style="left:88.00px;top:110.00px;font-family:'Liberation Sans', sans-serif;font-size:9.7px;color:#f0f0f0;letter-spacing:-0.042px;">Show &amp; Hide</div>
<div class=t style="left:189.00px;top:96.00px;font-family:'Liberation Sans', sans-serif;font-size:9.7px;color:#f0f0f0;letter-spacing:-0.541px;">Range</div>
<div class=t style="left:239.00px;top:69.50px;font-family:'Liberation Sans', sans-serif;font-size:9.7px;color:#f0f0f0;letter-spacing:0.065px;">Drop-down List</div>
<div class=t style="left:239.00px;top:90.00px;font-family:'Liberation Sans', sans-serif;font-size:9.7px;color:#f0f0f0;letter-spacing:-0.235px;">Prevent Typing</div>
<div class=t style="left:239.00px;top:110.00px;font-family:'Liberation Sans', sans-serif;font-size:9.7px;color:#f0f0f0;letter-spacing:-0.410px;">Copy Ranges</div>
<div class=t style="left:331.00px;top:96.00px;font-family:'Liberation Sans', sans-serif;font-size:9.7px;color:#f0f0f0;letter-spacing:-0.156px;">Content</div>
<div class=t style="left:386.40px;top:70.00px;font-family:'Liberation Sans', sans-serif;font-size:9.7px;color:#f0f0f0;letter-spacing:-0.014px;">To Actual</div>
<div class=t style="left:386.40px;top:90.00px;font-family:'Liberation Sans', sans-serif;font-size:9.7px;color:#f0f0f0;letter-spacing:-0.491px;">Round</div>
<div class=t style="left:386.40px;top:110.00px;font-family:'Liberation Sans', sans-serif;font-size:9.7px;color:#f0f0f0;letter-spacing:0.070px;">Merge &amp; Split</div>
<div class=t style="left:474.60px;top:95.00px;font-family:'Liberation Sans', sans-serif;font-size:9.7px;color:#f0f0f0;letter-spacing:-0.038px;">Editing</div>
<div class=t style="left:518.00px;top:95.00px;font-family:'Liberation Sans', sans-serif;font-size:9.7px;color:#f0f0f0;letter-spacing:-0.255px;">Formula</div>
<div class=t style="left:567.40px;top:96.60px;font-family:'Liberation Sans', sans-serif;font-size:9.7px;color:#f0f0f0;letter-spacing:-0.362px;">Re-run Last</div>
<div class=t style="left:575.00px;top:110.00px;font-family:'Liberation Sans', sans-serif;font-size:9.7px;color:#f0f0f0;letter-spacing:0.052px;">Utility</div>
<div class=t style="left:634.40px;top:94.60px;font-family:'Liberation Sans', sans-serif;font-size:9.7px;color:#f0f0f0;letter-spacing:0.021px;">Help</div>
<div class=t style="left:86.40px;top:128.00px;font-family:'Liberation Sans', sans-serif;font-size:8.6px;color:#dcdcdc;letter-spacing:-0.295px;">View</div>
<div class=t style="left:295.00px;top:128.00px;font-family:'Liberation Sans', sans-serif;font-size:8.6px;color:#dcdcdc;letter-spacing:-0.249px;">Ranges &amp; Cells</div>
<div class=t style="left:580.40px;top:128.00px;font-family:'Liberation Sans', sans-serif;font-size:8.6px;color:#dcdcdc;letter-spacing:-0.452px;">Rerun</div>
<div class=t style="left:13.40px;top:178.20px;font-family:'Liberation Sans', sans-serif;font-size:9.4px;color:#f2f2f2;letter-spacing:-0.469px;-webkit-text-stroke:0.1px;">B1</div>
<div class=t style="left:175.60px;top:178.50px;font-family:'Liberation Sans', sans-serif;font-size:10.3px;color:#f2f2f2;letter-spacing:0.111px;">Interval data</div>
<div class=t style="left:45.36px;top:200.20px;font-family:'Liberation Sans', sans-serif;font-size:10px;color:#e6e6e6;letter-spacing:0.000px;-webkit-text-stroke:0;">A</div>
<div class=t style="left:131.66px;top:200.20px;font-family:'Liberation Sans', sans-serif;font-size:10px;color:#e6e6e6;letter-spacing:0.000px;-webkit-text-stroke:0;">B</div>
<div class=t style="left:225.98px;top:200.20px;font-family:'Liberation Sans', sans-serif;font-size:10px;color:#e6e6e6;letter-spacing:0.000px;-webkit-text-stroke:0;">C</div>
<div class=t style="left:285.88px;top:200.20px;font-family:'Liberation Sans', sans-serif;font-size:10px;color:#e6e6e6;letter-spacing:0.000px;-webkit-text-stroke:0;">D</div>
<div class=t style="left:336.56px;top:200.20px;font-family:'Liberation Sans', sans-serif;font-size:10px;color:#e6e6e6;letter-spacing:0.000px;-webkit-text-stroke:0;">E</div>
<div class=t style="left:387.55px;top:200.20px;font-family:'Liberation Sans', sans-serif;font-size:10px;color:#e6e6e6;letter-spacing:0.000px;-webkit-text-stroke:0;">F</div>
<div class=t style="left:437.41px;top:200.20px;font-family:'Liberation Sans', sans-serif;font-size:10px;color:#e6e6e6;letter-spacing:0.000px;-webkit-text-stroke:0;">G</div>
<div class=t style="left:488.58px;top:200.20px;font-family:'Liberation Sans', sans-serif;font-size:10px;color:#e6e6e6;letter-spacing:0.000px;-webkit-text-stroke:0;">H</div>
<div class=t style="left:541.81px;top:200.20px;font-family:'Liberation Sans', sans-serif;font-size:10px;color:#e6e6e6;letter-spacing:0.000px;-webkit-text-stroke:0;">I</div>
<div class=t style="left:591.50px;top:200.20px;font-family:'Liberation Sans', sans-serif;font-size:10px;color:#e6e6e6;letter-spacing:0.000px;-webkit-text-stroke:0;">J</div>
<div class=t style="left:641.66px;top:200.20px;font-family:'Liberation Sans', sans-serif;font-size:10px;color:#e6e6e6;letter-spacing:0.000px;-webkit-text-stroke:0;">K</div>
<div class=t style="left:693.42px;top:200.20px;font-family:'Liberation Sans', sans-serif;font-size:10px;color:#e6e6e6;letter-spacing:0.000px;-webkit-text-stroke:0;clip-path:inset(0 2.5px 0 0);">L</div>
<div class=t style="left:9.38px;top:216.90px;font-family:'Liberation Sans', sans-serif;font-size:10.5px;color:#e8e8e8;letter-spacing:0.000px;-webkit-text-stroke:0.1px;">1</div>
<div class=t style="left:9.38px;top:233.30px;font-family:'Liberation Sans', sans-serif;font-size:10.5px;color:#e8e8e8;letter-spacing:0.000px;-webkit-text-stroke:0.1px;">2</div>
<div class=t style="left:9.38px;top:249.70px;font-family:'Liberation Sans', sans-serif;font-size:10.5px;color:#e8e8e8;letter-spacing:0.000px;-webkit-text-stroke:0.1px;">3</div>
<div class=t style="left:9.38px;top:266.10px;font-family:'Liberation Sans', sans-serif;font-size:10.5px;color:#e8e8e8;letter-spacing:0.000px;-webkit-text-stroke:0.1px;">4</div>
<div class=t style="left:9.38px;top:282.50px;font-family:'Liberation Sans', sans-serif;font-size:10.5px;color:#e8e8e8;letter-spacing:0.000px;-webkit-text-stroke:0.1px;">5</div>
<div class=t style="left:9.38px;top:298.35px;font-family:'Liberation Sans', sans-serif;font-size:10.5px;color:#e8e8e8;letter-spacing:0.000px;-webkit-text-stroke:0.1px;">6</div>
<div class=t style="left:9.38px;top:313.65px;font-family:'Liberation Sans', sans-serif;font-size:10.5px;color:#e8e8e8;letter-spacing:0.000px;-webkit-text-stroke:0.1px;">7</div>
<div class=t style="left:9.38px;top:328.95px;font-family:'Liberation Sans', sans-serif;font-size:10.5px;color:#e8e8e8;letter-spacing:0.000px;-webkit-text-stroke:0.1px;">8</div>
<div class=t style="left:9.38px;top:344.25px;font-family:'Liberation Sans', sans-serif;font-size:10.5px;color:#e8e8e8;letter-spacing:0.000px;-webkit-text-stroke:0.1px;">9</div>
<div class=t style="left:6.46px;top:359.55px;font-family:'Liberation Sans', sans-serif;font-size:10.5px;color:#e8e8e8;letter-spacing:0.000px;-webkit-text-stroke:0.1px;clip-path:inset(0 0 5.95px 0);">10</div>
<div class=t style="left:99.00px;top:216.20px;font-family:'Liberation Serif', serif;font-size:12.2px;color:#000;letter-spacing:-0.004px;font-weight:bold;-webkit-text-stroke:0.3px #000;">Interval data</div>
<div class=t style="left:212.00px;top:216.20px;font-family:'Liberation Serif', serif;font-size:12.2px;color:#000;letter-spacing:-0.129px;font-weight:bold;-webkit-text-stroke:0.3px #000;">Count</div>
<div class=t style="left:108.40px;top:232.50px;font-family:'Liberation Serif', serif;font-size:12.4px;color:#000;letter-spacing:0.040px;-webkit-text-stroke:0.3px #000;">mid 10-15</div>
<div class=t style="left:226.50px;top:232.50px;font-family:'Liberation Serif', serif;font-size:12.4px;color:#000;letter-spacing:0.000px;-webkit-text-stroke:0.3px #000;">5</div>
<div class=t style="left:108.40px;top:248.90px;font-family:'Liberation Serif', serif;font-size:12.4px;color:#000;letter-spacing:0.040px;-webkit-text-stroke:0.3px #000;">mid 15-20</div>
<div class=t style="left:223.40px;top:248.90px;font-family:'Liberation Serif', serif;font-size:12.4px;color:#000;letter-spacing:0.000px;-webkit-text-stroke:0.3px #000;">10</div>
<div class=t style="left:108.40px;top:265.30px;font-family:'Liberation Serif', serif;font-size:12.4px;color:#000;letter-spacing:0.040px;-webkit-text-stroke:0.3px #000;">mid 25-30</div>
<div class=t style="left:223.40px;top:265.30px;font-family:'Liberation Serif', serif;font-size:12.4px;color:#000;letter-spacing:0.000px;-webkit-text-stroke:0.3px #000;">15</div>
<div class=t style="left:108.40px;top:281.70px;font-family:'Liberation Serif', serif;font-size:12.4px;color:#000;letter-spacing:0.040px;-webkit-text-stroke:0.3px #000;">mid 30-35</div>
<div class=t style="left:223.40px;top:281.70px;font-family:'Liberation Serif', serif;font-size:12.4px;color:#000;letter-spacing:0.000px;-webkit-text-stroke:0.3px #000;">25</div>
<div class=t style="left:8.40px;top:395.00px;font-family:'Liberation Sans', sans-serif;font-size:8.4px;color:#e8e8e8;letter-spacing:-0.405px;-webkit-text-stroke:0.2px;">Ready</div>
<div class=t style="left:44.00px;top:395.00px;font-family:'Liberation Sans', sans-serif;font-size:8.4px;color:#e8e8e8;letter-spacing:-0.143px;-webkit-text-stroke:0.2px;">Sheet 1 of 1</div>
<div class=t style="left:100.40px;top:395.00px;font-family:'Liberation Sans', sans-serif;font-size:8.4px;color:#e8e8e8;letter-spacing:-0.044px;-webkit-text-stroke:0.2px;">Workbook Statistics</div>
<div class=t style="left:227.40px;top:395.00px;font-family:'Liberation Sans', sans-serif;font-size:8.4px;color:#e8e8e8;letter-spacing:0.020px;-webkit-text-stroke:0.2px;">Accessibility: Good to go</div>
<div class=t style="left:350.00px;top:395.00px;font-family:'Liberation Sans', sans-serif;font-size:8.4px;color:#e8e8e8;letter-spacing:-0.133px;-webkit-text-stroke:0.2px;">Average: 17.5</div>
<div class=t style="left:413.00px;top:395.00px;font-family:'Liberation Sans', sans-serif;font-size:8.4px;color:#e8e8e8;letter-spacing:-0.182px;-webkit-text-stroke:0.2px;">Count: 6</div>
<div class=t style="left:456.00px;top:395.00px;font-family:'Liberation Sans', sans-serif;font-size:8.4px;color:#e8e8e8;letter-spacing:-0.301px;-webkit-text-stroke:0.2px;">Sum: 35</div>
<div class=t style="left:98.00px;top:371.80px;font-family:'Liberation Sans', sans-serif;font-size:10.6px;color:#222;letter-spacing:-0.430px;font-weight:bold;-webkit-text-stroke:0;">Sheet1</div>
</div></body></html>
